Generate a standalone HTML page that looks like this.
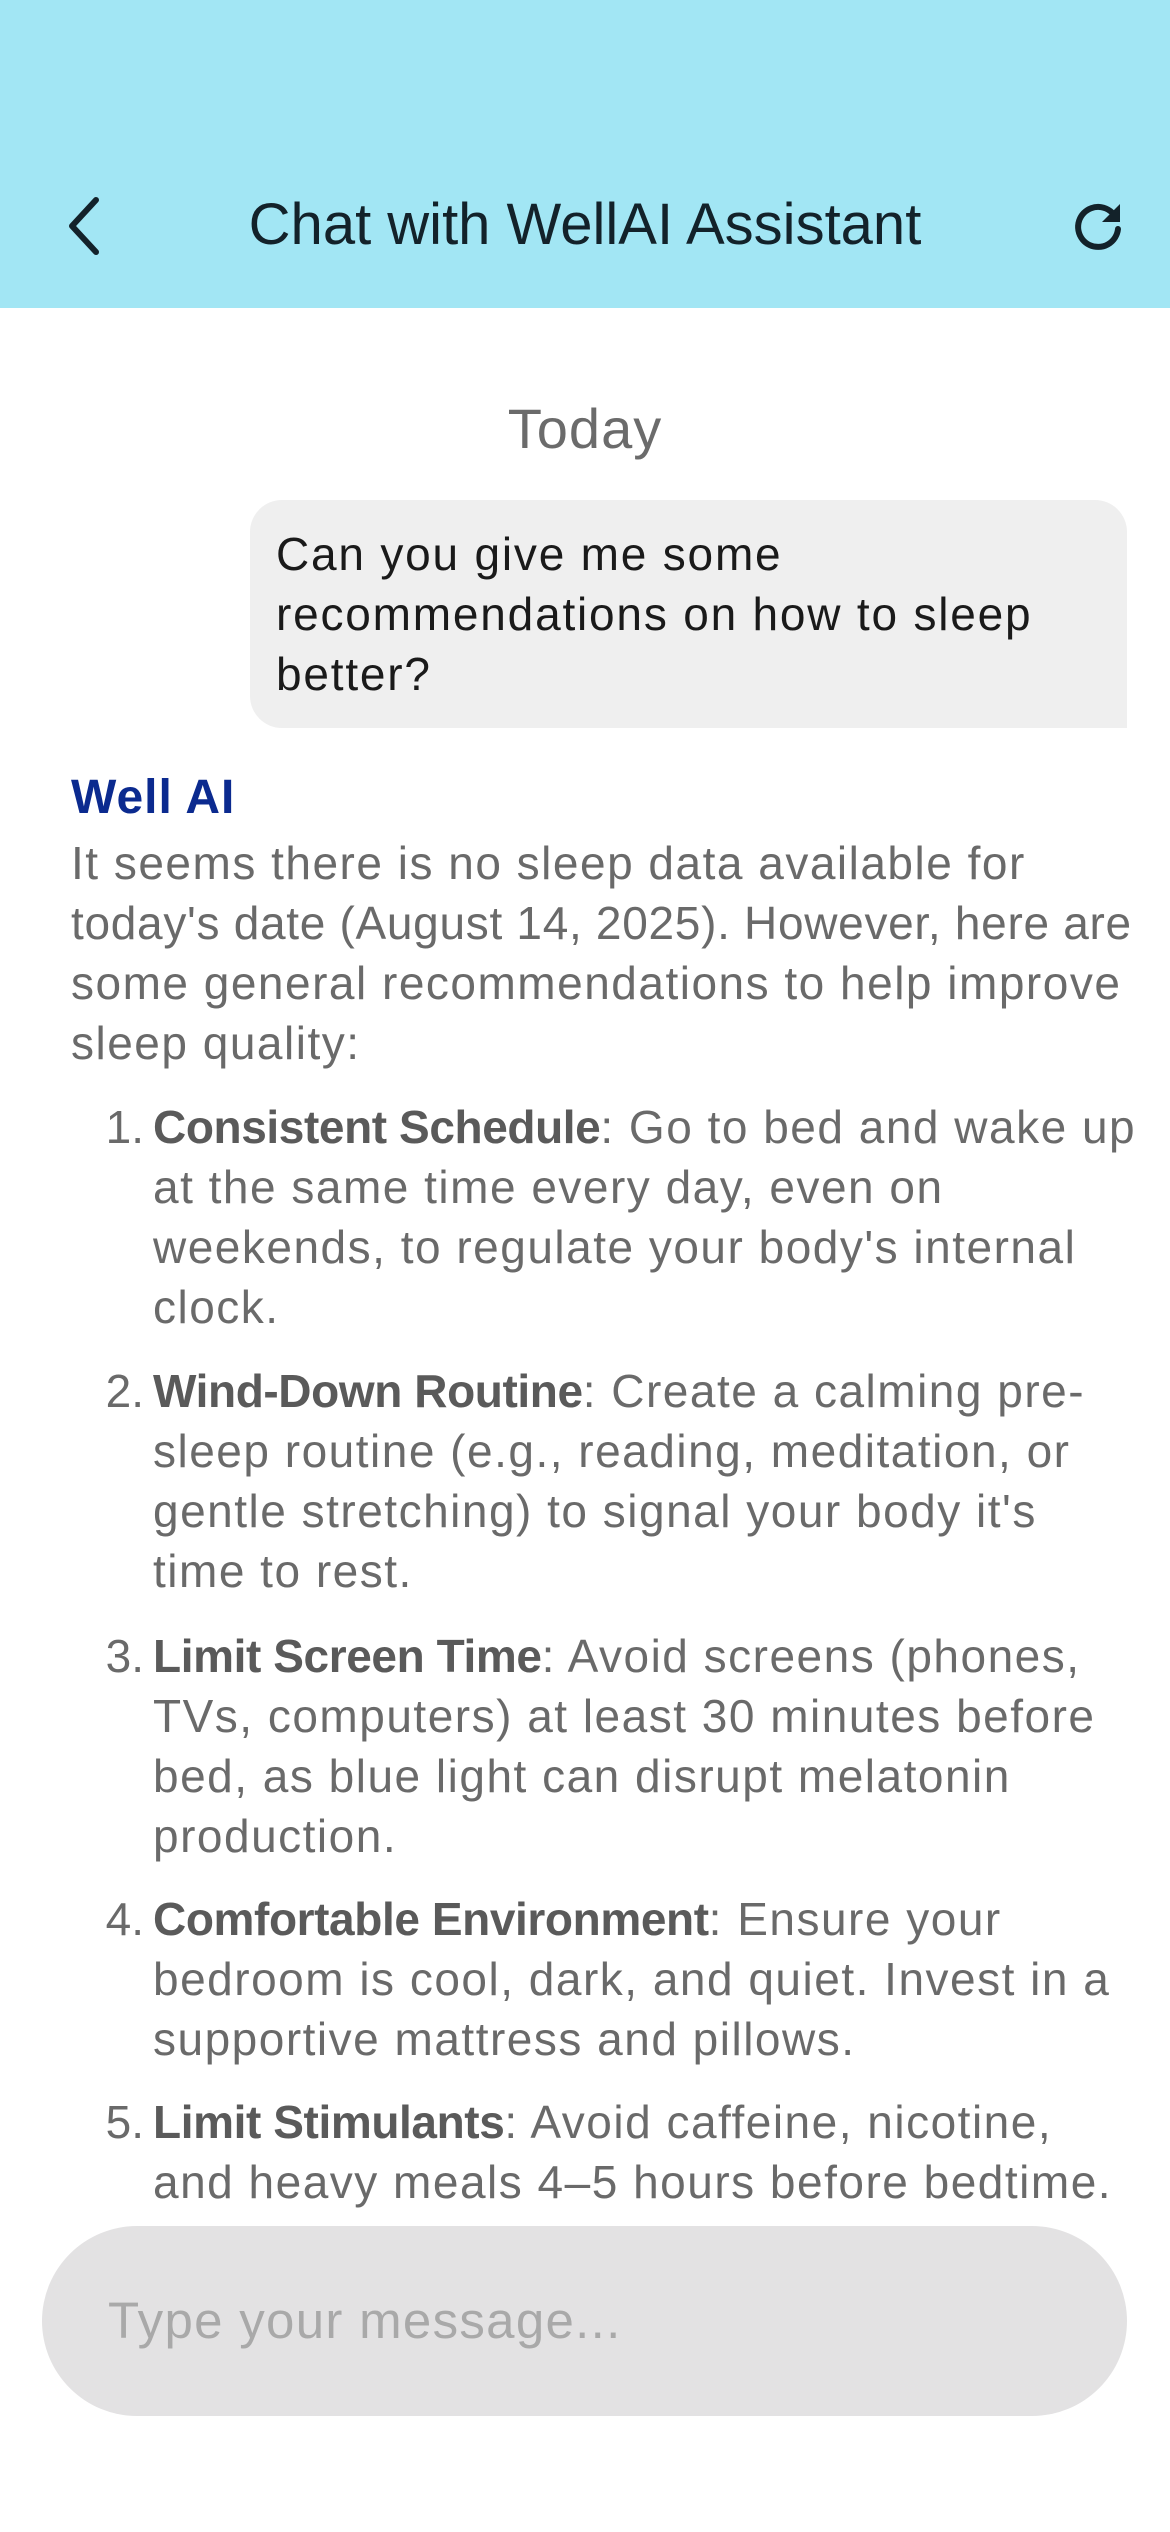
<!DOCTYPE html>
<html><head><meta charset="utf-8"><style>
*{margin:0;padding:0;box-sizing:border-box}
body{width:1170px;height:2532px;background:#fff;position:relative;overflow:hidden;font-family:"Liberation Sans",sans-serif}
.hdr{position:absolute;left:0;top:0;width:1170px;height:308px;background:#a2e6f4}
.title{position:absolute;left:0;width:1170px;top:190px;text-align:center;font-size:58px;font-weight:500;color:#13222a;line-height:70px}
.today{position:absolute;left:0;width:1170px;top:396px;text-align:center;font-size:56px;color:#6b6b6b;line-height:66px;letter-spacing:1px}
.bub{position:absolute;left:250px;top:500px;width:877px;height:228px;background:#efefef;border-radius:32px 32px 0 32px}
.t{position:absolute;white-space:nowrap;font-size:46px;line-height:60px;letter-spacing:1.5px}
.ut{left:276px;top:524px;color:#1a1a1a;letter-spacing:1.8px}
.wa{position:absolute;left:71px;top:770px;font-size:48px;font-weight:bold;color:#0b2a8f;letter-spacing:1px}
.p{left:71px;color:#6a6a6a}
.li{left:153px;color:#6a6a6a}
.n{position:absolute;color:#6a6a6a;font-size:46px;line-height:60px;text-align:right;width:60px;left:84px}
b{font-weight:600;color:#5a5a5a;letter-spacing:-0.4px}
.inp{position:absolute;left:42px;top:2226px;width:1085px;height:190px;background:#e3e2e3;border-radius:95px}
.ph{position:absolute;left:108px;top:2291px;font-size:51px;color:#a9a9a9;letter-spacing:1.3px;line-height:60px}
</style></head><body>
<div class="hdr"></div>
<svg style="position:absolute;left:62px;top:196px" width="44" height="60" viewBox="0 0 44 60"><path d="M34 4 L10 30 L34 56" fill="none" stroke="#13222a" stroke-width="6" stroke-linecap="round" stroke-linejoin="round"/></svg>
<div class="title">Chat with WellAI Assistant</div>
<svg style="position:absolute;left:1072px;top:198px" width="54" height="54" viewBox="0 0 54 54"><path d="M44 20 A20 20 0 1 0 46 31" fill="none" stroke="#13222a" stroke-width="6" stroke-linecap="round"/><path d="M48 6 L48 24 L30 24 Z" fill="#13222a"/></svg>
<div class="today">Today</div>
<div class="bub"></div>
<div class="t ut">Can you give me some<br>recommendations on how to sleep<br>better?</div>
<div class="wa">Well AI</div>
<div class="t p" style="top:833px">It seems there is no sleep data available for<br><span style="letter-spacing:0.7px">today's date (August 14, 2025). However, here are</span><br>some general recommendations to help improve<br>sleep quality:</div>

<div class="n" style="top:1097px">1.</div>
<div class="t li" style="top:1097px"><b>Consistent Schedule</b>: Go to bed and wake up<br>at the same time every day, even on<br>weekends, to regulate your body's internal<br>clock.</div>
<div class="n" style="top:1361px">2.</div>
<div class="t li" style="top:1361px"><b>Wind-Down Routine</b>: Create a calming pre-<br>sleep routine (e.g., reading, meditation, or<br>gentle stretching) to signal your body it's<br>time to rest.</div>
<div class="n" style="top:1626px">3.</div>
<div class="t li" style="top:1626px"><b>Limit Screen Time</b>: Avoid screens (phones,<br>TVs, computers) at least 30 minutes before<br>bed, as blue light can disrupt melatonin<br>production.</div>
<div class="n" style="top:1889px">4.</div>
<div class="t li" style="top:1889px"><b>Comfortable Environment</b>: Ensure your<br>bedroom is cool, dark, and quiet. Invest in a<br>supportive mattress and pillows.</div>
<div class="n" style="top:2092px">5.</div>
<div class="t li" style="top:2092px"><b>Limit Stimulants</b>: Avoid caffeine, nicotine,<br>and heavy meals 4–5 hours before bedtime.</div>

<div class="inp"></div>
<div class="ph">Type your message...</div>
</body></html>
